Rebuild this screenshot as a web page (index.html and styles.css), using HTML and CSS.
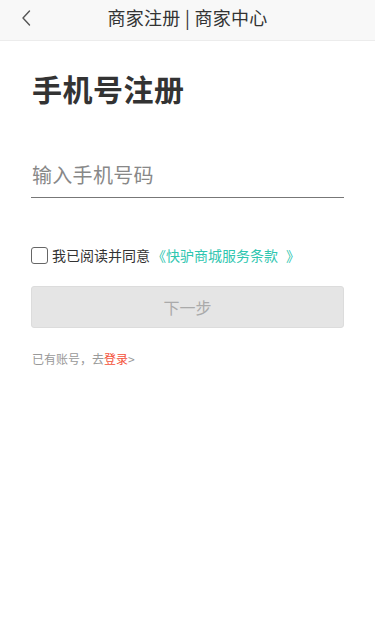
FILE: index.html
```html
<!DOCTYPE html>
<html lang="zh-CN">
<head>
<meta charset="utf-8">
<meta name="viewport" content="width=device-width, initial-scale=1">
<title>商家注册 | 商家中心</title>
<link rel="stylesheet" href="styles.css">
</head>
<body>
<header class="topbar">
  <a class="back" href="#" aria-label="返回">
    <svg width="12" height="18" viewBox="0 0 12 18"><path d="M9.5 2 L3 9 L9.5 16" fill="none" stroke="#555" stroke-width="1.4" stroke-linecap="round" stroke-linejoin="round"/></svg>
  </a>
  <h1 class="topbar-title">商家注册 | 商家中心</h1>
</header>
<main class="content">
  <h2 class="page-title">手机号注册</h2>
  <div class="field">
    <input class="phone-input" type="tel" placeholder="输入手机号码">
  </div>
  <label class="agree">
    <span class="checkbox"></span>
    <span class="agree-text">我已阅读并同意<a class="terms" href="#">《快驴商城服务条款<span class="gap"></span>》</a></span>
  </label>
  <button class="next-btn" type="button">下一步</button>
  <p class="login-line">已有账号，去<a class="login-link" href="#">登录</a>&gt;</p>
</main>
</body>
</html>
```
FILE: styles.css
```css
* { box-sizing: border-box; }
html, body {
  margin: 0;
  padding: 0;
  background: #fff;
  font-family: "Noto Sans CJK SC", "Noto Sans", sans-serif;
}
.topbar {
  height: 41px;
  background: #f8f8f8;
  border-bottom: 1px solid #ececec;
  display: flex;
  align-items: center;
  justify-content: center;
  position: relative;
}
.back {
  position: absolute;
  left: 20px;
  top: 8px;
  width: 14px;
  height: 20px;
  display: flex;
  align-items: center;
}
.topbar-title {
  margin: 0;
  margin-top: -6px;
  font-size: 18px;
  letter-spacing: 0.3px;
  font-weight: 400;
  color: #333;
  line-height: 24px;
}
.content {
  padding: 0 31px;
}
.page-title {
  margin: 26px 0 0 1px;
  font-size: 30px;
  letter-spacing: 0.5px;
  font-weight: 700;
  color: #333;
  line-height: 42px;
}
.field {
  margin-top: 47px;
  border-bottom: 1px solid #777;
}
.phone-input {
  display: block;
  width: 100%;
  border: 0;
  outline: none;
  padding: 0 0 5px 1px;
  height: 41px;
  font-size: 20px;
  letter-spacing: 0.3px;
  font-family: inherit;
  color: #333;
  background: transparent;
}
.phone-input::placeholder { color: #888; }
.agree {
  margin-top: 47px;
  display: flex;
  align-items: center;
  height: 20px;
}
.checkbox {
  width: 17px;
  height: 17px;
  border: 1.5px solid #666;
  border-radius: 3px;
  margin-right: 4px;
  flex: none;
}
.agree-text {
  font-size: 14px;
  color: #333;
  line-height: 20px;
}
.terms {
  color: #2fc6b0;
  text-decoration: none;
  margin-left: 2px;
}
.gap {
  display: inline-block;
  width: 8px;
}
.next-btn {
  display: block;
  width: 100%;
  height: 42px;
  margin-top: 21px;
  background: #e5e5e5;
  border: 1px solid #dcdcdc;
  border-radius: 3px;
  font-size: 16px;
  font-family: inherit;
  color: #aaa;
  padding: 0;
}
.login-line {
  margin: 22px 0 0 1px;
  font-size: 12px;
  color: #999;
  line-height: 18px;
}
.login-link {
  color: #f4513a;
  text-decoration: none;
}
```
